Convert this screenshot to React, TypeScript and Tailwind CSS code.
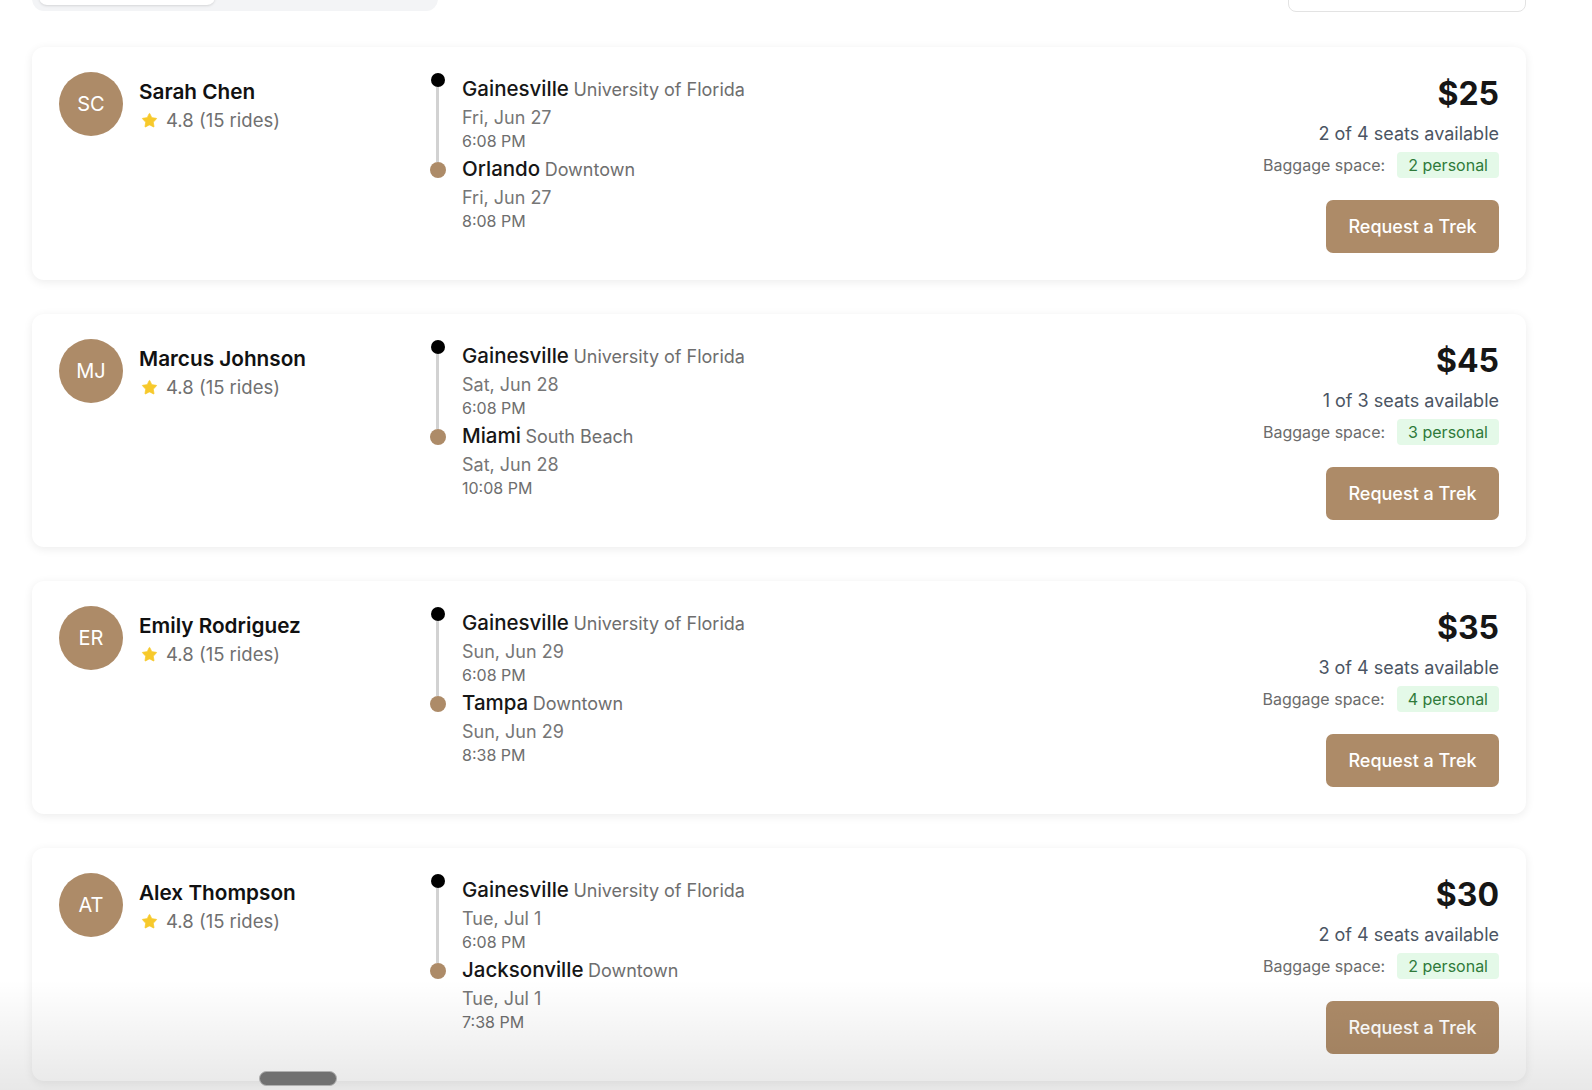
import { Star } from "lucide-react";

type Trip = {
  initials: string;
  name: string;
  from: { city: string; place: string; date: string; time: string };
  to: { city: string; place: string; date: string; time: string };
  price: number;
  seats: string;
  baggage: string;
};

const trips: Trip[] = [
  {
    initials: "SC",
    name: "Sarah Chen",
    from: { city: "Gainesville", place: "University of Florida", date: "Fri, Jun 27", time: "6:08 PM" },
    to: { city: "Orlando", place: "Downtown", date: "Fri, Jun 27", time: "8:08 PM" },
    price: 25,
    seats: "2 of 4 seats available",
    baggage: "2 personal",
  },
  {
    initials: "MJ",
    name: "Marcus Johnson",
    from: { city: "Gainesville", place: "University of Florida", date: "Sat, Jun 28", time: "6:08 PM" },
    to: { city: "Miami", place: "South Beach", date: "Sat, Jun 28", time: "10:08 PM" },
    price: 45,
    seats: "1 of 3 seats available",
    baggage: "3 personal",
  },
  {
    initials: "ER",
    name: "Emily Rodriguez",
    from: { city: "Gainesville", place: "University of Florida", date: "Sun, Jun 29", time: "6:08 PM" },
    to: { city: "Tampa", place: "Downtown", date: "Sun, Jun 29", time: "8:38 PM" },
    price: 35,
    seats: "3 of 4 seats available",
    baggage: "4 personal",
  },
  {
    initials: "AT",
    name: "Alex Thompson",
    from: { city: "Gainesville", place: "University of Florida", date: "Tue, Jul 1", time: "6:08 PM" },
    to: { city: "Jacksonville", place: "Downtown", date: "Tue, Jul 1", time: "7:38 PM" },
    price: 30,
    seats: "2 of 4 seats available",
    baggage: "2 personal",
  },
];

const Stop = ({ stop, first }: { stop: Trip["from"]; first?: boolean }) => (
  <div className={first ? "" : "mt-[4px]"}>
    <div className="leading-[28px] whitespace-nowrap">
      <span className="text-[20.5px] font-medium text-[#161616]">{stop.city}</span>{" "}
      <span className="text-[18px] text-[#6e6e6e]">{stop.place}</span>
    </div>
    <div className="mt-[2px] text-[18px] leading-[24px] text-[#767676]">{stop.date}</div>
    <div className="mt-[1px] text-[16px] leading-[20px] text-[#6e6e6e]">{stop.time}</div>
  </div>
);

const RideCard = ({ trip }: { trip: Trip }) => (
  <div className="flex rounded-xl bg-white pl-[27px] pr-[27px] pt-[25px] pb-[27px] shadow-[0_2px_10px_rgba(0,0,0,0.08)]">
    <div className="flex w-[371px] shrink-0 items-start gap-4">
      <div className="flex h-16 w-16 shrink-0 items-center justify-center rounded-full bg-[#ad8b68] text-[20px] text-white">
        {trip.initials}
      </div>
      <div className="pt-[6px]">
        <div className="text-[20.75px] font-semibold leading-[28px] text-[#111]">{trip.name}</div>
        <div className="mt-[1px] flex items-center gap-2 text-[18.5px] leading-[27px] text-[#707070]">
          <Star className="ml-[2px] h-[17px] w-[17px] fill-[#f7c92b] text-[#f7c92b]" strokeWidth={1} />
          <span>4.8 (15 rides)</span>
        </div>
      </div>
    </div>

    <div className="flex flex-1 gap-[17px]">
      <div className="flex w-[15px] shrink-0 flex-col items-center pt-[1px]">
        <div className="h-[14px] w-[14px] rounded-full bg-black" />
        <div className="w-[3px] flex-1 bg-[#d2d2d2]" style={{ maxHeight: 77 }} />
        <div className="h-4 w-4 rounded-full bg-[#ad8b68]" />
        <div className="flex-1" />
      </div>
      <div className="pt-[3px]">
        <Stop stop={trip.from} first />
        <Stop stop={trip.to} />
      </div>
    </div>

    <div className="flex flex-col items-end text-right">
      <div className="mt-[2px] text-[32px] font-bold leading-[40px] text-[#161616]">${trip.price}</div>
      <div className="mt-[6px] text-[18px] leading-[28px] text-[#4b5563]">{trip.seats}</div>
      <div className="mt-[4px] flex items-center gap-3">
        <span className="text-[16px] text-[#6b6b6b]">Baggage space:</span>
        <span className="rounded-[4px] bg-[#e4f9e8] px-[11px] text-[16px] leading-[26px] text-[#2f7a3a]">
          {trip.baggage}
        </span>
      </div>
      <button className="mt-[22px] h-[53px] w-[173px] rounded-[7px] bg-[#ad8b68] text-[18px] font-medium text-white">
        Request a Trek
      </button>
    </div>
  </div>
);

export default function App() {
  return (
    <div
      className="relative h-screen overflow-hidden bg-white"
      style={{ fontFamily: "Inter, 'Noto Sans', sans-serif" }}
    >
      <div className="-mt-[36px] w-[1526px] pl-8">
        <div className="flex items-start justify-between">
          <div className="h-[47px] w-[406px] rounded-xl bg-[#f3f4f6] p-[7px] pb-[6px]">
            <div className="h-full w-[176px] rounded-lg bg-white shadow-sm" />
          </div>
          <div className="h-[48px] w-[238px] rounded-lg border border-[#e3e3e3] bg-white" />
        </div>

        <div className="mt-[35px] flex flex-col gap-[34px]">
          {trips.map((t) => (
            <RideCard key={t.name} trip={t} />
          ))}
        </div>
      </div>

      <div className="pointer-events-none absolute inset-x-0 bottom-0 h-[110px] bg-gradient-to-b from-transparent to-[rgba(0,0,0,0.09)]" />
      <div className="absolute left-[259px] top-[1071px] h-[15px] w-[78px] rounded-full border border-[#b0b0b0] bg-[#707070]" />
    </div>
  );
}
